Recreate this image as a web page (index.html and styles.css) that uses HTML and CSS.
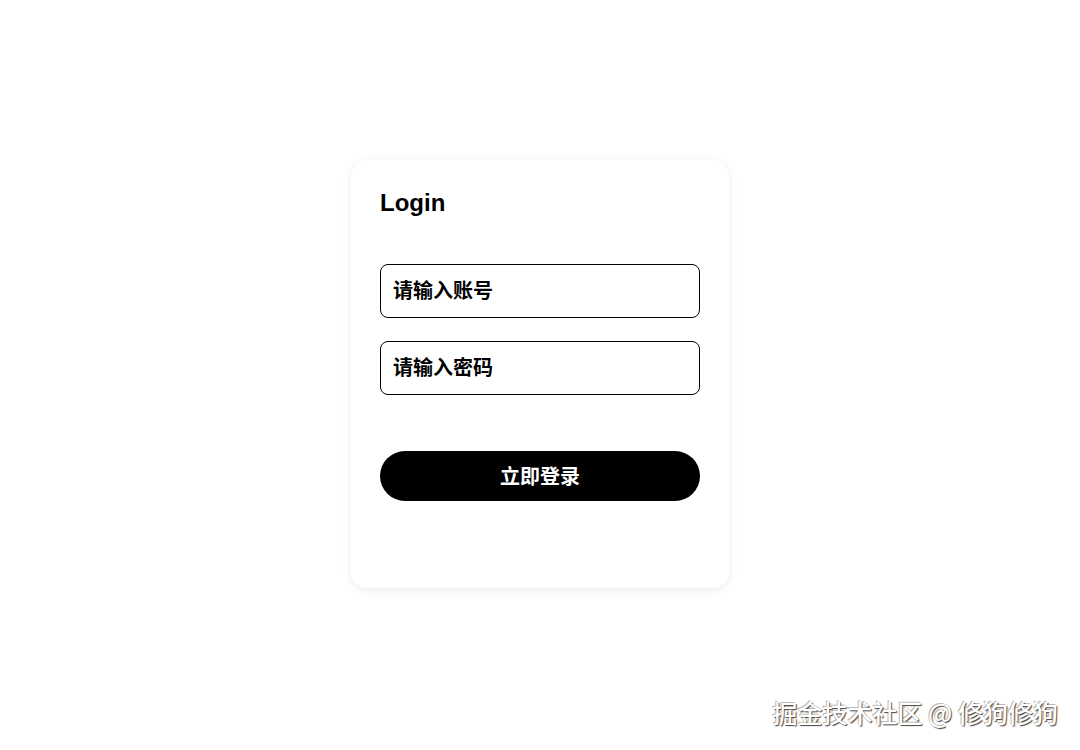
FILE: index.html
```html
<!DOCTYPE html>
<html lang="zh-CN">
<head>
<meta charset="utf-8">
<title>Login</title>
<link rel="stylesheet" href="styles.css">
</head>
<body>
<main class="page">
  <form class="card">
    <h1 class="title">Login</h1>
    <div class="fields">
      <input class="field" type="text" placeholder="请输入账号">
      <input class="field" type="password" placeholder="请输入密码">
    </div>
    <button class="submit" type="button">立即登录</button>
  </form>
</main>
<div class="watermark">掘金技术社区 @ 修狗修狗</div>
</body>
</html>
```

FILE: styles.css
```css
html, body {
  margin: 0;
  padding: 0;
  background: #fff;
}
body {
  font-family: "Liberation Sans", "Noto Sans CJK SC", sans-serif;
}
.page {
  height: 748px;
  display: flex;
  align-items: center;
  justify-content: center;
}
.card {
  box-sizing: border-box;
  width: 378px;
  height: 428px;
  padding: 28px 29px 0;
  background: #fff;
  border-radius: 16px;
  box-shadow: 0 2px 10px rgba(0, 0, 0, 0.08);
  display: flex;
  flex-direction: column;
}
.title {
  margin: 0;
  font-size: 24px;
  line-height: 30px;
  font-weight: 700;
  color: #000;
}
.fields {
  margin-top: 46px;
  display: flex;
  flex-direction: column;
  gap: 23px;
}
.field {
  box-sizing: border-box;
  width: 320px;
  height: 54px;
  margin: 0;
  padding: 0 12px 3px;
  border: 1px solid #000;
  border-radius: 8px;
  background: #fff;
  font-family: "Noto Sans CJK SC", sans-serif;
  font-size: 20px;
  font-weight: 700;
  color: #000;
  outline: none;
}
.field::placeholder {
  color: #000;
  opacity: 1;
}
.submit {
  margin-top: 56px;
  width: 320px;
  height: 50px;
  border: none;
  border-radius: 25px;
  background: #000;
  color: #fff;
  font-family: "Noto Sans CJK SC", sans-serif;
  font-size: 20px;
  font-weight: 700;
  padding: 0 0 2px;
}
.watermark {
  position: absolute;
  right: 22px;
  top: 694px;
  font-family: "Noto Sans CJK SC", sans-serif;
  font-size: 25px;
  line-height: 36px;
  font-weight: 500;
  color: #fff;
  text-shadow: 1px 1px 1px #444, -1px -1px 0 #bbb;
  white-space: nowrap;
}
```
